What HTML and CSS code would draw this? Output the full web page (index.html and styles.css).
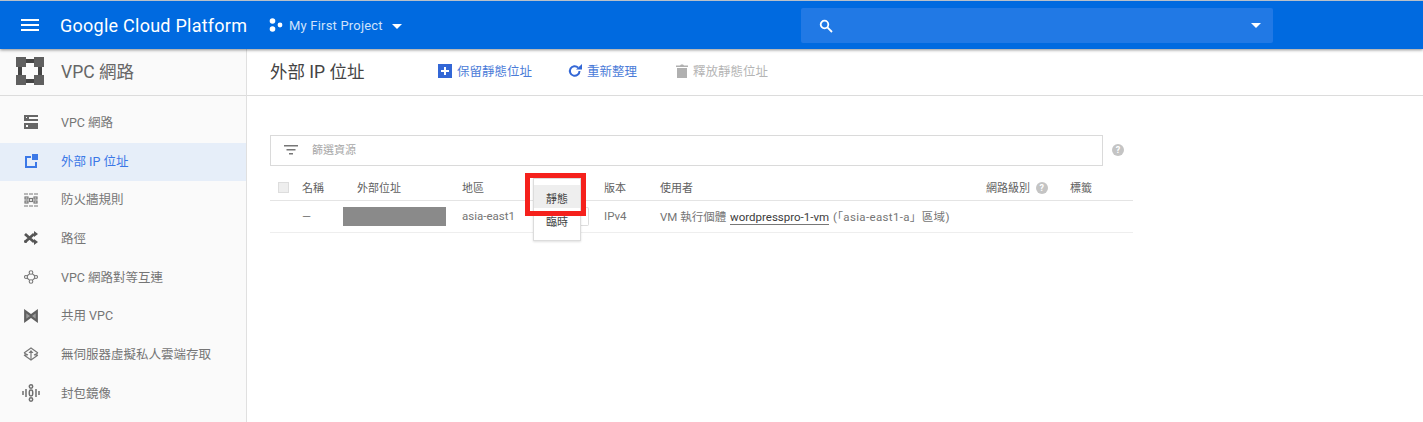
FILE: index.html
```html
<!DOCTYPE html>
<html lang="zh-Hant">
<head>
    <meta charset="UTF-8">
    <title>外部 IP 位址</title>
    <link rel="stylesheet" href="styles.css">
</head>
<body>
    <header class="topbar">
        <svg class="menu-icon" width="18" height="12" viewBox="0 0 18 12"><path d="M0 0h18v2H0zM0 5h18v2H0zM0 10h18v2H0z" fill="#fff"/></svg>
        <span class="brand">Google Cloud Platform</span>
        <svg class="project-icon" width="14" height="14" viewBox="0 0 14 14"><g fill="#fff"><circle cx="3.5" cy="3" r="2.8"/><circle cx="3.5" cy="11" r="2.8"/><circle cx="11" cy="7" r="2.4"/></g></svg>
        <span class="project">My First Project</span>
        <span class="caret"></span>
        <div class="search">
            <svg width="14" height="14" viewBox="0 0 14 14"><circle cx="5.5" cy="5.5" r="3.8" fill="none" stroke="#fff" stroke-width="1.8"/><path d="M8.4 8.4L13 13" stroke="#fff" stroke-width="1.8"/></svg>
            <span class="caret search-caret"></span>
        </div>
    </header>

    <div class="main">
        <aside class="sidebar">
            <div class="side-title">
                <svg width="28" height="28" viewBox="0 0 28 28"><g fill="#5f5f5f"><path d="M0 0h10v10H0zM18 0h10v10H18zM0 18h10v10H0zM18 18h10v10H18z"/></g><path d="M10 2h8v4h-8zM10 22h8v4h-8zM2 10h4v8H2zM22 10h4v8h-4z" fill="#444"/></svg>
                <span>VPC 網路</span>
            </div>
            <nav class="side-nav">
                <a class="side-item">
                    <svg width="14" height="14" viewBox="0 0 14 14"><path d="M0 0h14v6H0zM0 8h14v6H0z" fill="#666"/><path d="M5 2h9v2H5zM2 10h2v2H2zM2 2h1v1H2z" fill="#fafafa"/></svg>
                    <span>VPC 網路</span>
                </a>
                <a class="side-item active">
                    <svg width="14" height="14" viewBox="0 0 14 14"><path d="M1 2h6v2H3v8h8V8h2v6H1z" fill="#3b78e7"/><path d="M8 0h6v6H8z" fill="#3b78e7"/></svg>
                    <span>外部 IP 位址</span>
                </a>
                <a class="side-item">
                    <svg width="14" height="14" viewBox="0 0 14 14"><g fill="none" stroke="#777" stroke-width="1.200"><path d="M0 1h14M0 13h14" stroke-dasharray="4 1"/><rect x="1" y="4" width="3" height="2"/><rect x="10" y="4" width="3" height="2"/><rect x="1" y="8" width="3" height="2"/><rect x="10" y="8" width="3" height="2"/><rect x="5.500" y="5.500" width="3" height="3"/></g></svg>
                    <span>防火牆規則</span>
                </a>
                <a class="side-item">
                    <svg width="14" height="14" viewBox="0 0 14 14"><path d="M1 3l9 8M1 11l9-8" stroke="#555" stroke-width="2.800" fill="none"/><path d="M10 0l4 3-4 3zM10 8l4 3-4 3z" fill="#555"/><circle cx="1.500" cy="10.500" r="1.500" fill="#555"/></svg>
                    <span>路徑</span>
                </a>
                <a class="side-item">
                    <svg width="14" height="14" viewBox="0 0 14 14"><g fill="none" stroke="#777" stroke-width="1.100"><circle cx="7" cy="2.500" r="1.800"/><circle cx="7" cy="11.500" r="1.800"/><circle cx="2" cy="7" r="1.500"/><circle cx="12" cy="7" r="1.500"/><path d="M5.500 3.800L3 6M8.500 3.800L11 6M5.500 10.200L3 8M8.500 10.200L11 8"/></g></svg>
                    <span>VPC 網路對等互連</span>
                </a>
                <a class="side-item">
                    <svg width="14" height="14" viewBox="0 0 14 14"><path d="M1.200 2.200L7 6.500l5.800-4.300v9.600L7 7.500l-5.800 4.300z" fill="#999" stroke="#5f5f5f" stroke-width="2.200"/></svg>
                    <span>共用 VPC</span>
                </a>
                <a class="side-item">
                    <svg width="16" height="14" viewBox="0 0 16 14"><g fill="none" stroke="#777" stroke-width="1.200"><path d="M1 6l7-5 7 5M1 8l7 5 7-5M1 6l4 2M15 6l-4 2M1 8h3M15 8h-3"/><path d="M8 12V5"/></g><path d="M5.500 6L8 3l2.500 3z" fill="#777"/></svg>
                    <span>無伺服器虛擬私人雲端存取</span>
                </a>
                <a class="side-item">
                    <svg width="18" height="18" viewBox="0 0 18 18"><g fill="none" stroke="#6f6f6f" stroke-width="1.500"><path d="M1 7v4M4 5v8M14 5v8M17 7v4"/><circle cx="9" cy="2.500" r="1.700"/><circle cx="9" cy="15.500" r="1.700"/><rect x="7.300" y="6" width="3.400" height="6" rx="1.700"/></g></svg>
                    <span>封包鏡像</span>
                </a>
            </nav>
        </aside>

        <main class="content">
            <div class="toolbar">
                <h1 class="page-title">外部 IP 位址</h1>
                <a class="tool tool-reserve">
                    <svg width="14" height="14" viewBox="0 0 14 14"><path d="M0 0h14v14H0z" fill="#3367d6"/><path d="M6 3h2v3h3v2H8v3H6V8H3V6h3z" fill="#fff"/></svg>
                    保留靜態位址
                </a>
                <a class="tool tool-refresh">
                    <svg width="14" height="14" viewBox="0 0 14 14"><path d="M11.500 7a4.800 4.800 0 1 1-1.400-3.400" fill="none" stroke="#3367d6" stroke-width="2"/><path d="M8 5.500h6V0z" fill="#3367d6"/></svg>
                    重新整理
                </a>
                <a class="tool tool-release">
                    <svg width="12" height="14" viewBox="0 0 12 14"><path d="M1 4h10v10H1zM0 1.500h4L5 .5h2l1 1h4V3H0z" fill="#b0b0b0"/></svg>
                    釋放靜態位址
                </a>
            </div>

            <div class="table-area">
                <div class="filter-row">
                    <div class="filter">
                        <svg width="14" height="10" viewBox="0 0 14 10"><path d="M0 0h14v1.500H0zM2.500 4h9v1.500h-9zM5 8h4v1.500H5z" fill="#777"/></svg>
                        <span>篩選資源</span>
                    </div>
                    <span class="help help-large">?</span>
                </div>

                <table class="ip-table">
                    <thead>
                        <tr>
                            <th class="col-check"><span class="checkbox"></span></th>
                            <th class="col-name">名稱</th>
                            <th class="col-address">外部位址</th>
                            <th class="col-region">地區</th>
                            <th class="col-type"></th>
                            <th class="col-version">版本</th>
                            <th class="col-user">使用者</th>
                            <th class="col-tier">網路級別 <span class="help">?</span></th>
                            <th>標籤</th>
                        </tr>
                    </thead>
                    <tbody>
                        <tr>
                            <td></td>
                            <td>—</td>
                            <td><span class="masked"></span></td>
                            <td>asia-east1</td>
                            <td></td>
                            <td>IPv4</td>
                            <td class="user-cell" colspan="2">VM 執行個體 <a class="vm-link">wordpresspro-1-vm</a> <span class="vm-zone">(「asia-east1-a」區域)</span></td>
                            <td></td>
                        </tr>
                    </tbody>
                </table>

                <span class="type-select"></span>
                <ul class="type-menu">
                    <li class="selected">靜態</li>
                    <li>臨時</li>
                </ul>
                <span class="highlight"></span>
            </div>
        </main>
    </div>
</body>
</html>
```

FILE: styles.css
```css
* {
    box-sizing: border-box;
}
html, body {
    height: 100%;
}
body {
    margin: 0;
    height: 422px;
    overflow: hidden;
    background: #fff;
    color: #757575;
    font-family: Roboto, "Noto Sans CJK TC", sans-serif;
    font-size: 11px;
    display: flex;
    flex-direction: column;
}
svg {
    flex: none;
}

/* top bar */
.topbar {
    height: 49px;
    flex: none;
    border-top: 1px solid #b9c0c9;
    background: #006ae0;
    color: #fff;
    display: flex;
    align-items: center;
    padding-left: 21px;
    box-shadow: 0 1px 3px rgba(0,0,0,0.45);
    position: relative;
    z-index: 2;
}
.brand {
    margin-left: 21px;
    font-size: 18px;
    letter-spacing: 0.25px;
    width: 209px;
    white-space: nowrap;
}
.project {
    margin-left: 6px;
    font-size: 13px;
    letter-spacing: 0.2px;
    color: #cfe2fb;
    white-space: nowrap;
}
.caret {
    width: 0;
    height: 0;
    margin-left: 9px;
    margin-top: 2px;
    border-left: 5.500px solid transparent;
    border-right: 5.500px solid transparent;
    border-top: 5.500px solid #fff;
}
.search {
    position: absolute;
    left: 801px;
    top: 7px;
    width: 472px;
    height: 35px;
    background: #2179e5;
    border-radius: 2px;
    display: flex;
    align-items: center;
    justify-content: space-between;
    padding: 0 12px 0 18px;
}
.search-caret {
    margin: 0;
}

.main {
    flex: 1;
    display: flex;
    min-height: 0;
}

/* left nav */
.sidebar {
    width: 247px;
    flex: none;
    background: #fafafa;
    border-right: 1px solid #e0e0e0;
}
.side-title {
    height: 47px;
    border-bottom: 1px solid #dcdcdc;
    display: flex;
    align-items: center;
    padding: 0 0 3px 16px;
    font-size: 17.500px;
    color: #666;
}
.side-title span {
    margin-left: 17px;
}
.side-nav {
    padding-top: 8px;
}
.side-item {
    height: 38.700px;
    display: grid;
    grid-template-columns: 61px 1fr;
    align-items: center;
    padding-bottom: 4px;
    font-size: 12.500px;
    color: #757575;
    white-space: nowrap;
}
.side-item svg {
    justify-self: center;
    margin-top: 2px;
}
.side-item.active {
    background: #e6eef9;
    color: #3b78e7;
}

/* toolbar */
.content {
    flex: 1;
    min-width: 0;
}
.toolbar {
    height: 47px;
    border-bottom: 1px solid #dcdcdc;
    display: flex;
    align-items: center;
    padding: 0 0 3px 23px;
}
.page-title {
    margin: 0;
    font-size: 17.500px;
    font-weight: 400;
    color: #444;
    width: 168px;
    white-space: nowrap;
}
.tool {
    display: flex;
    align-items: center;
    gap: 5px;
    font-size: 12.500px;
    color: #4a7bd8;
    white-space: nowrap;
}
.tool-reserve {
    width: 130px;
}
.tool-refresh {
    width: 108px;
}
.tool-release {
    color: #b5b5b5;
}

/* filter and table */
.table-area {
    position: relative;
    padding: 39px 0 0 23px;
}
.filter-row {
    display: flex;
    align-items: center;
}
.filter {
    width: 833px;
    height: 31px;
    border: 1px solid #dadada;
    display: flex;
    align-items: center;
    gap: 14px;
    padding: 0 0 1px 13px;
    color: #a8a8a8;
}
.filter span {
    margin-bottom: 2px;
}
.help {
    display: inline-block;
    width: 12px;
    height: 12px;
    border-radius: 50%;
    background: #c4c4c4;
    color: #fff;
    font-size: 9px;
    font-weight: 700;
    line-height: 12px;
    text-align: center;
    vertical-align: 1px;
    margin-left: 3px;
}
.help-large {
    margin: 0 0 2px 9px;
}
.ip-table {
    width: 863px;
    margin-top: 9px;
    border-collapse: collapse;
    table-layout: fixed;
}
.ip-table th {
    height: 25px;
    padding: 0;
    font-weight: 400;
    text-align: left;
    color: #5f5f5f;
    border-bottom: 1px solid #e4e4e4;
}
.ip-table td {
    height: 32px;
    padding: 0;
    font-size: 11.500px;
    border-bottom: 1px solid #eee;
    white-space: nowrap;
}
.col-check {
    width: 32px;
}
.col-name {
    width: 55px;
}
.col-address {
    width: 105px;
}
.col-region {
    width: 71px;
}
.col-type {
    width: 71px;
}
.col-version {
    width: 56px;
}
.col-user {
    width: 326px;
}
.col-tier {
    width: 84px;
}
.checkbox {
    display: block;
    width: 11px;
    height: 11px;
    margin-left: 8px;
    background: #eee;
    border: 1px solid #ddd;
}
.masked {
    display: block;
    width: 103px;
    height: 19px;
    margin-left: -14px;
    background: #8a8a8a;
}
.vm-link {
    margin-left: 1px;
    color: #3c3c3c;
    border-bottom: 1px solid #777;
}
.vm-zone {
    margin-left: 1px;
    letter-spacing: 0.35px;
}

/* type dropdown, opened over the row */
.type-select {
    position: absolute;
    left: 334px;
    top: 111px;
    width: 8px;
    height: 19px;
    border: 1px solid #ddd;
    border-left: 0;
    border-radius: 0 2px 2px 0;
}
.type-menu {
    position: absolute;
    left: 286px;
    top: 82px;
    width: 48px;
    height: 63px;
    margin: 0;
    padding: 6px 0 0;
    list-style: none;
    background: #fff;
    border: 1px solid #dcdcdc;
    box-shadow: 0 1px 2px rgba(0,0,0,0.12);
    color: #444;
    text-align: center;
}
.type-menu li {
    height: 23px;
    line-height: 30px;
}
.type-menu .selected {
    background: #eee;
}
.highlight {
    position: absolute;
    left: 278px;
    top: 77px;
    width: 61px;
    height: 43px;
    border: 5px solid #f5211c;
}
```
